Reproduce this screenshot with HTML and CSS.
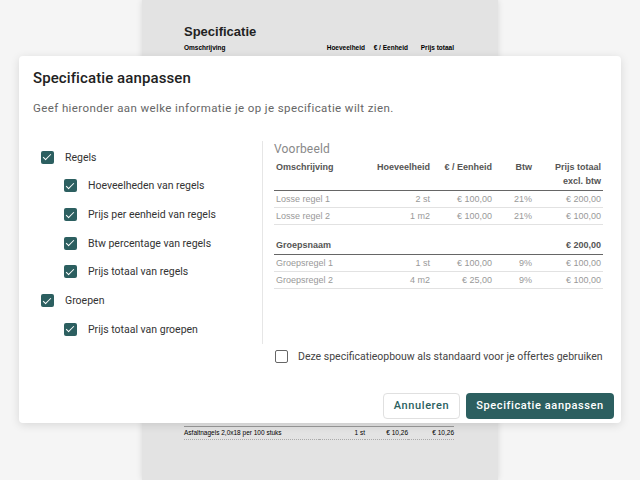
FILE: index.html
```html
<html>
<head>
    <title>Specificatie aanpassen</title>
    <link rel="stylesheet" href="styles.css">
</head>
<body>
    <div class="page">
        <div class="paper">
            <h1 class="paper-title">Specificatie</h1>
            <table class="paper-table">
                <tr class="paper-head">
                    <td class="p-desc">Omschrijving</td>
                    <td class="p-qty">Hoeveelheid</td>
                    <td class="p-unit">€ / Eenheid</td>
                    <td class="p-total">Prijs totaal</td>
                </tr>
            </table>
            <table class="paper-table paper-bottom">
                <tr>
                    <td class="p-desc">Asfaltnagels 2,0x18 per 100 stuks</td>
                    <td class="p-qty">1 st</td>
                    <td class="p-unit">€ 10,26</td>
                    <td class="p-total">€ 10,26</td>
                </tr>
            </table>
        </div>
    </div>

    <div class="dialog">
        <h2 class="dialog-title">Specificatie aanpassen</h2>
        <p class="dialog-intro">Geef hieronder aan welke informatie je op je specificatie wilt zien.</p>

        <div class="dialog-body">
            <div class="options">
                <label class="option"><span class="box checked"></span>Regels</label>
                <label class="option sub"><span class="box checked"></span>Hoeveelheden van regels</label>
                <label class="option sub"><span class="box checked"></span>Prijs per eenheid van regels</label>
                <label class="option sub"><span class="box checked"></span>Btw percentage van regels</label>
                <label class="option sub"><span class="box checked"></span>Prijs totaal van regels</label>
                <label class="option"><span class="box checked"></span>Groepen</label>
                <label class="option sub"><span class="box checked"></span>Prijs totaal van groepen</label>
            </div>

            <div class="preview">
                <div class="preview-title">Voorbeeld</div>
                <table class="spec">
                    <colgroup>
                        <col class="c-desc"><col class="c-qty"><col class="c-unit"><col class="c-vat"><col class="c-total">
                    </colgroup>
                    <tr class="spec-head">
                        <th class="left">Omschrijving</th>
                        <th>Hoeveelheid</th>
                        <th>€ / Eenheid</th>
                        <th>Btw</th>
                        <th>Prijs totaal<br>excl. btw</th>
                    </tr>
                    <tr>
                        <td class="left">Losse regel 1</td><td>2 st</td><td>€ 100,00</td><td>21%</td><td>€ 200,00</td>
                    </tr>
                    <tr>
                        <td class="left">Losse regel 2</td><td>1 m2</td><td>€ 100,00</td><td>21%</td><td>€ 100,00</td>
                    </tr>
                </table>
                <table class="spec group">
                    <colgroup>
                        <col class="c-desc"><col class="c-qty"><col class="c-unit"><col class="c-vat"><col class="c-total">
                    </colgroup>
                    <tr class="group-head">
                        <th class="left">Groepsnaam</th><th></th><th></th><th></th><th>€ 200,00</th>
                    </tr>
                    <tr>
                        <td class="left">Groepsregel 1</td><td>1 st</td><td>€ 100,00</td><td>9%</td><td>€ 100,00</td>
                    </tr>
                    <tr>
                        <td class="left">Groepsregel 2</td><td>4 m2</td><td>€ 25,00</td><td>9%</td><td>€ 100,00</td>
                    </tr>
                </table>
            </div>
        </div>

        <label class="default-option"><span class="box"></span>Deze specificatieopbouw als standaard voor je offertes gebruiken</label>

        <div class="actions">
            <button class="btn btn-secondary">Annuleren</button>
            <button class="btn btn-primary">Specificatie aanpassen</button>
        </div>
    </div>
</body>
</html>
```

FILE: styles.css
```css
body {
    margin: 0;
    width: 640px;
    height: 480px;
    overflow: hidden;
    background: #f5f5f5;
    font-family: Roboto, "Liberation Sans", sans-serif;
}

/* document behind the dialog */
.page {
    display: flex;
    justify-content: flex-start;
    padding-left: 142px;
    height: 480px;
}
.paper {
    width: 356px;
    height: 480px;
    background: #e3e3e3;
    box-shadow: 0 0 6px rgba(0,0,0,0.12);
    padding: 24px 44px 0 42px;
    box-sizing: border-box;
    font-family: "Liberation Sans", Arial, sans-serif;
    color: #222;
}
.paper-title {
    margin: 0 0 5px 0;
    font-size: 13px;
    line-height: 15px;
}
.paper-table {
    width: 100%;
    border-collapse: collapse;
    font-size: 6.5px;
}
.paper-table td {
    padding: 0;
    line-height: 8px;
    white-space: nowrap;
}
.paper-head td {
    font-weight: bold;
}
.p-desc { width: 135px; }
.p-qty { width: 46px; text-align: right; }
.p-unit { width: 43px; text-align: right; }
.p-total { text-align: right; }
.paper-bottom {
    margin-top: 374px;
    border-top: 1px solid #999;
    border-bottom: 1px dotted #aaa;
}
.paper-bottom td {
    padding: 2px 0 2px 0;
    font-weight: normal;
}

/* dialog */
.dialog {
    position: absolute;
    left: 19px;
    top: 56px;
    width: 602px;
    height: 367px;
    box-sizing: border-box;
    padding: 12px 7px 0 14px;
    background: #fff;
    border-radius: 4px;
    box-shadow: 0 2px 10px rgba(0,0,0,0.12);
    display: flex;
    flex-direction: column;
}
.dialog-title {
    margin: 0;
    font-size: 15px;
    line-height: 20px;
    font-weight: 500;
    color: #222;
    letter-spacing: 0.1px;
}
.dialog-intro {
    margin: 10px 0 0 0;
    font-size: 11.5px;
    line-height: 20px;
    color: #666;
    letter-spacing: 0.4px;
}
.dialog-body {
    display: flex;
    margin-top: 23px;
}
.options {
    width: 221px;
    padding: 2px 0 0 8px;
    border-right: 1px solid #e6e6e6;
}
.option {
    display: flex;
    align-items: center;
    height: 28.67px;
    font-size: 10.5px;
    color: #333;
    letter-spacing: 0;
}
.option.sub {
    padding-left: 23px;
}
.box {
    width: 13px;
    height: 13px;
    box-sizing: border-box;
    border: 1.5px solid #666;
    border-radius: 2px;
    margin-right: 11px;
    flex: none;
}
.box.checked {
    border: none;
    background: #2c5f60;
    position: relative;
}
.box.checked::after {
    content: "";
    position: absolute;
    left: 4px;
    top: 1.5px;
    width: 3px;
    height: 7px;
    border: solid #fff;
    border-width: 0 1.6px 1.6px 0;
    transform: rotate(45deg);
}

.preview {
    padding-left: 11px;
    width: 329px;
}
.preview-title {
    font-size: 12px;
    line-height: 16px;
    color: #888;
    letter-spacing: 0.2px;
}
.spec {
    width: 329px;
    border-collapse: collapse;
    table-layout: fixed;
    font-family: "Liberation Sans", Arial, sans-serif;
    font-size: 9px;
}
.c-desc { width: 96px; }
.c-qty { width: 62px; }
.c-unit { width: 62px; }
.c-vat { width: 40px; }
.c-total { width: 69px; }
.spec th,
.spec td {
    text-align: right;
    padding: 0 2px 0 0;
    white-space: nowrap;
}
.spec .left {
    text-align: left;
    padding-left: 2px;
}
.spec-head th {
    color: #555;
    font-weight: bold;
    line-height: 14px;
    vertical-align: top;
    padding-top: 3px;
    padding-bottom: 2px;
    border-bottom: 1px solid #666;
}
.spec td {
    color: #999;
    height: 17px;
    border-bottom: 1px solid #e2e2e2;
}
.group {
    margin-top: 12px;
}
.group-head th {
    color: #555;
    font-weight: bold;
    height: 17px;
    border-bottom: 1px solid #666;
}

.default-option {
    display: flex;
    align-items: center;
    margin: 3px 0 0 242px;
    height: 20px;
    font-size: 10.5px;
    color: #444;
    letter-spacing: 0;
    white-space: nowrap;
}
.default-option .box {
    margin-right: 10px;
}

.actions {
    display: flex;
    justify-content: flex-end;
    gap: 6px;
    margin-top: 26px;
}
.btn {
    height: 26px;
    border-radius: 4px;
    font-family: Roboto, sans-serif;
    font-size: 11px;
    font-weight: 500;
    letter-spacing: 0.6px;
    padding: 0;
    white-space: nowrap;
}
.btn-secondary {
    width: 77px;
    background: #fff;
    border: 1px solid #e0e0e0;
    color: #2c5f60;
}
.btn-primary {
    width: 148px;
    background: #2c5f60;
    border: none;
    color: #fff;
}
```
